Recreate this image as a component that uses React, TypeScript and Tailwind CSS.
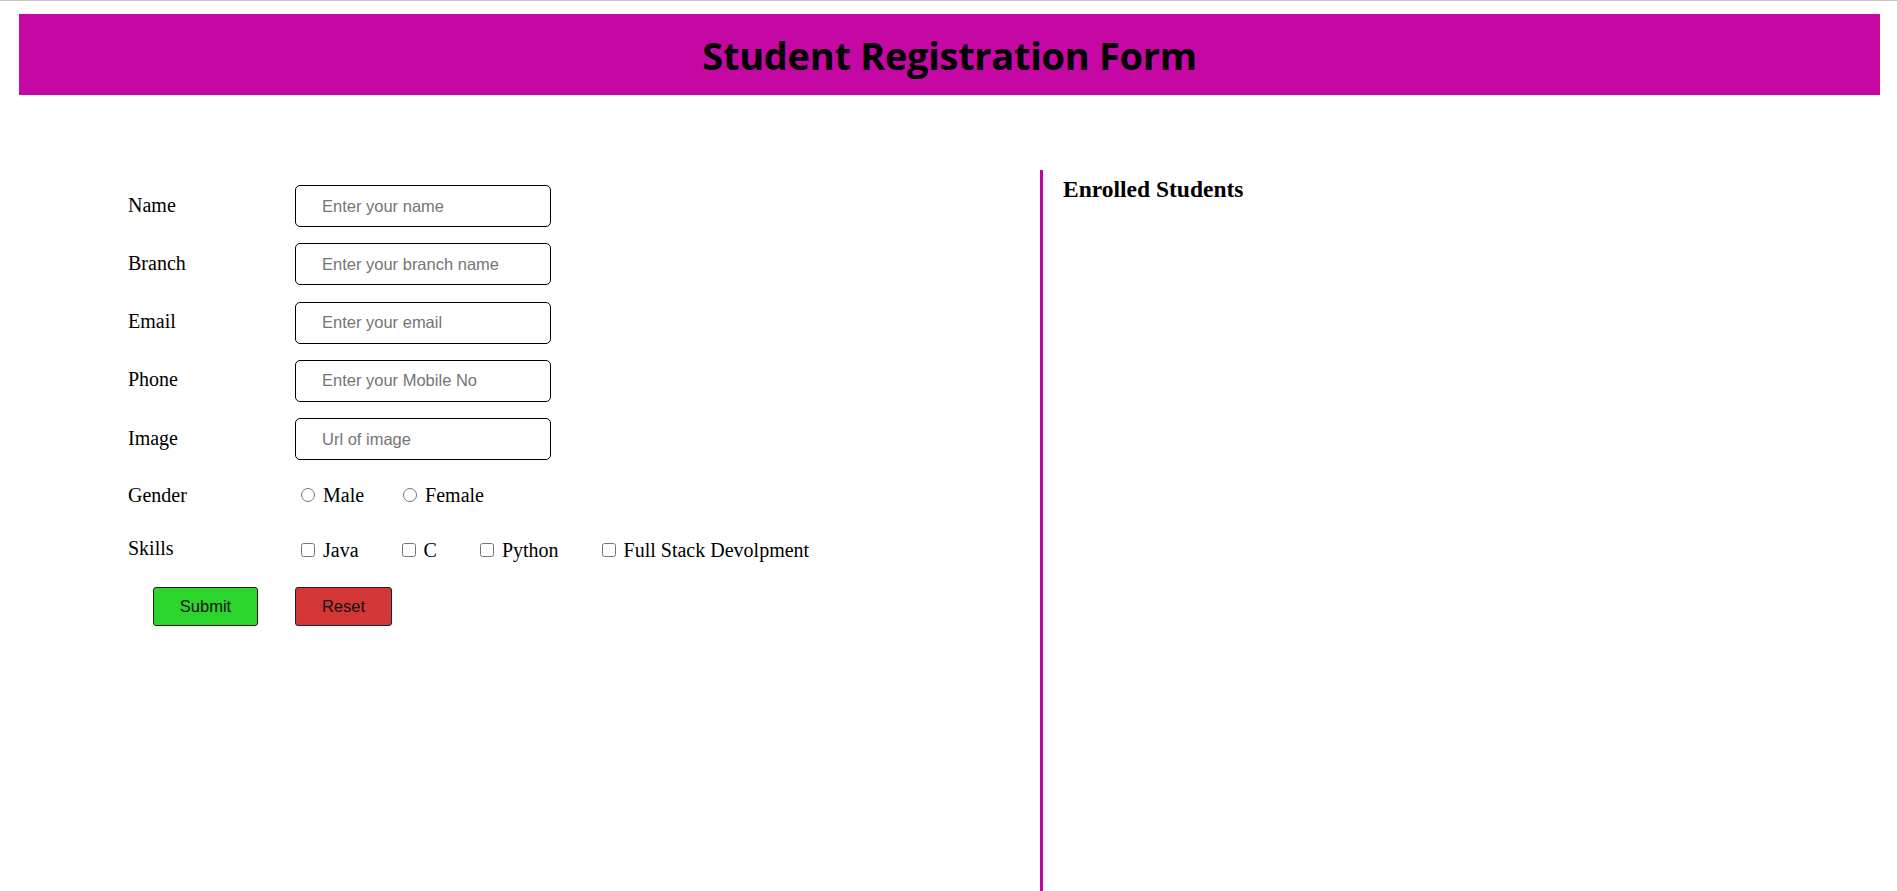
export default function App() {
  const fields = [
    { label: "Name", placeholder: "Enter your name" },
    { label: "Branch", placeholder: "Enter your branch name" },
    { label: "Email", placeholder: "Enter your email" },
    { label: "Phone", placeholder: "Enter your Mobile No" },
    { label: "Image", placeholder: "Url of image" },
  ];

  return (
    <div className="w-full h-[891px] bg-white flex flex-col overflow-hidden font-['Liberation_Serif',serif] text-black">
      {/* thin top rule */}
      <div className="h-px w-full bg-[#c8c4c1]"></div>

      {/* Header banner */}
      <header className="mt-[13px] ml-[19px] w-[1861px] h-[81px] bg-[#c507a3] flex items-center justify-center">
        <h1 className="font-['Open_Sans',sans-serif] font-bold text-[38px] leading-none tracking-[-0.3px] text-black">
          Student Registration Form
        </h1>
      </header>

      <main className="mt-[75px] flex h-[721px]">
        {/* Form */}
        <form className="w-[1040px] pl-[128px] pt-[15px] flex flex-col">
          {fields.map((f) => (
            <div key={f.label} className="h-[42px] mb-[16.25px] flex items-center">
              <label className="w-[167px] text-[20px] leading-[23px] -mt-[2px]">{f.label}</label>
              <input
                type="text"
                placeholder={f.placeholder}
                className="w-[256px] h-[42px] border border-black rounded-[5px] pl-[26px] font-['Liberation_Sans',sans-serif] text-[16.5px] placeholder:text-[#757575] outline-none"
              />
            </div>
          ))}

          <div className="h-[42px] mt-[-2.25px] flex items-center">
            <span className="w-[167px] text-[20px] leading-[23px]">Gender</span>
            <div className="text-[20px] leading-[23px]">
              <label className="mr-[33px]">
                <input type="radio" name="gender" className="w-[14px] h-[14px] ml-[6px] mr-[3px]" /> Male
              </label>
              <label>
                <input type="radio" name="gender" className="w-[14px] h-[14px] ml-[6px] mr-[3px]" /> Female
              </label>
            </div>
          </div>

          <div className="h-[42px] mt-[13px] flex items-center">
            <span className="w-[167px] text-[20px] leading-[23px] -mt-[3px]">Skills</span>
            <div className="text-[20px] leading-[23px]">
              <label className="mr-[37px]">
                <input type="checkbox" className="w-[14px] h-[14px] ml-[6px] mr-[3px]" /> Java
              </label>
              <label className="mr-[37px]">
                <input type="checkbox" className="w-[14px] h-[14px] ml-[6px] mr-[3px]" /> C
              </label>
              <label className="mr-[37px]">
                <input type="checkbox" className="w-[14px] h-[14px] ml-[6px] mr-[3px]" /> Python
              </label>
              <label>
                <input type="checkbox" className="w-[14px] h-[14px] ml-[6px] mr-[3px]" /> Full Stack Devolpment
              </label>
            </div>
          </div>

          <div className="mt-[16px] flex font-['Liberation_Sans',sans-serif] text-[16.5px] text-[#111]">
            <button type="button" className="ml-[25px] w-[105px] h-[39px] bg-[#2bd52b] border border-[#222] rounded-[3px]">
              Submit
            </button>
            <button type="reset" className="ml-[37px] w-[97px] h-[39px] bg-[#d43535] border border-[#222] rounded-[3px]">
              Reset
            </button>
          </div>
        </form>

        {/* Enrolled list */}
        <section className="flex-1 border-l-[3px] border-[#bb08a0] pl-[20px] pt-[6px]">
          <h3 className="font-bold text-[23.5px] leading-[26px]">Enrolled Students</h3>
        </section>
      </main>
    </div>
  );
}
